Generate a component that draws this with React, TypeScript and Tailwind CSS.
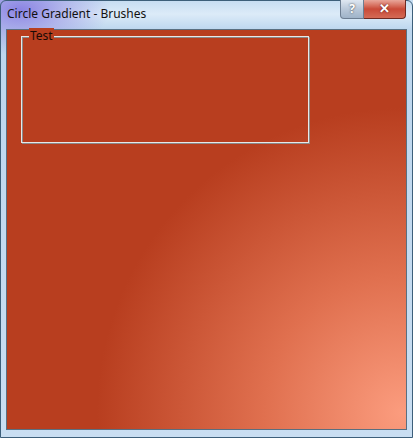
import React from "react";

export default function App() {
  return (
    <div
      className="relative w-[413px] h-[438px] overflow-hidden flex flex-col"
      style={{
        background:
          "radial-gradient(ellipse 90px 45px at 20px 10px, rgba(130,120,225,0.9) 0%, rgba(160,155,230,0.6) 50%, rgba(190,215,240,0) 100%), linear-gradient(180deg, #c5dcf1 0px, #dcebf8 14px, #bcd6ee 30px, #c9def2 100%)",
        fontFamily: '"Noto Sans", "Liberation Sans", sans-serif',
      }}
    >
      <div className="absolute inset-0 rounded-t-[6px] border border-[#3d5f7a] pointer-events-none" />
      {/* title bar */}
      <div className="relative h-[29px] shrink-0 flex items-start">
        <span className="pl-[7px] pt-[6px] text-[12px] leading-[16px] text-[#111]">
          Circle Gradient - Brushes
        </span>
        <div className="absolute top-0 right-[7px] flex">
          <div className="w-[24px] h-[19px] rounded-bl-[4px] border border-[#6d7e92] border-t-0 bg-gradient-to-b from-[#dfe7f1] via-[#b9c8d9] to-[#9fb3c8] flex items-center justify-center text-[12px] font-bold text-white [text-shadow:0_0_2px_#333]">
            ?
          </div>
          <div className="w-[42px] h-[19px] rounded-br-[4px] border border-[#6e2a22] border-t-0 border-l-0 bg-gradient-to-b from-[#e8a69a] via-[#c94a38] to-[#d46a55] flex items-center justify-center text-[13px] font-bold text-white [text-shadow:0_0_2px_#501010]">
            ✕
          </div>
        </div>
      </div>
      {/* client */}
      <div className="mx-[6px] flex-1 mb-[8px] border border-[#5a6f80]">
        <div
          className="w-full h-full relative pt-[6px] pl-[14px]"
          style={{
            background:
              "radial-gradient(circle 305px at 99% 96%, #fb9c7e 0%, #e0704f 45%, #b83e1f 100%)",
          }}
        >
          <div className="relative w-[288px] h-[107px] border border-[#e8e8e8] shadow-[inset_1px_1px_0_#8a8a8a,1px_1px_0_#8a8a8a]">
            <span className="absolute left-[7px] top-[-9px] px-[1px] text-[12px] leading-[16px] text-[#1a0a05] bg-[#b83e1f]">
              Test
            </span>
          </div>
        </div>
      </div>
    </div>
  );
}
